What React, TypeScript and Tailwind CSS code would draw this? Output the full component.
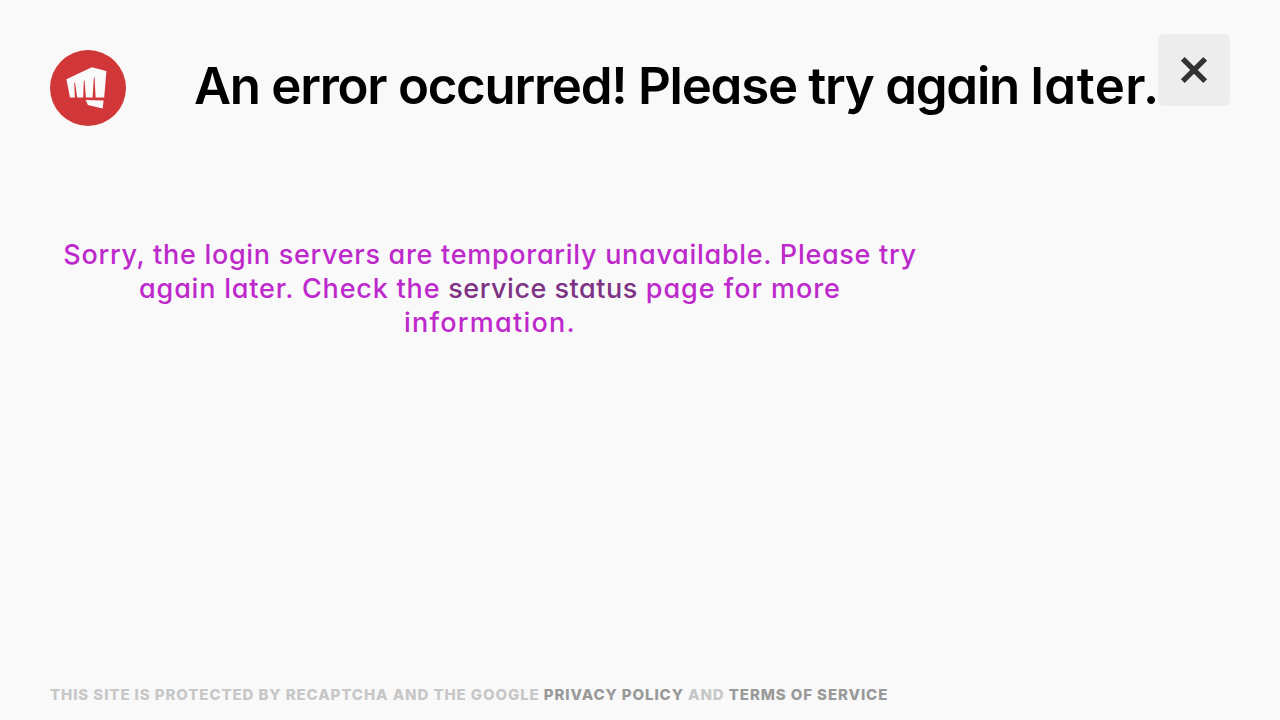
import { FC } from 'react';

const Logo: FC = () => (
  <svg viewBox="0 0 76 76" className="h-[76px] w-[76px] shrink-0" aria-hidden="true">
    <circle cx="38" cy="38" r="38" fill="#d13639" />
    <path
      fill="#f9f9f9"
      d="M16.4 29.3 41.8 17.3 56.4 21 54.2 47.5H45.6L44.6 27.3 43.9 27.5 42.6 47.5H35.9L34.5 30.5 33.8 30.7 33.2 47.5H27.2L25 32.5 24.2 32.7 24.9 47.5H20ZM35.6 50 53.6 50.6 52.7 58.6 37.9 55Z"
    />
  </svg>
);

const CloseButton: FC = () => (
  <button
    aria-label="Close"
    className="-mt-4 flex h-[72px] w-[72px] shrink-0 items-center justify-center rounded-md bg-[#ededed]"
  >
    <svg viewBox="0 0 28 28" className="h-7 w-7" fill="none" stroke="#333" strokeWidth="5.4">
      <path d="M2.8 2.8 25.2 25.2M25.2 2.8 2.8 25.2" />
    </svg>
  </button>
);

const App: FC = () => {
  return (
    <div className="flex h-screen flex-col overflow-hidden bg-[#f9f9f9] px-[50px] font-['Inter',sans-serif] [font-feature-settings:'cv11']">
      <header className="flex items-start pt-[50px]">
        <Logo />
        <h1 className="ml-[68px] w-[964px] shrink-0 whitespace-nowrap text-[51px] leading-[72px] font-semibold tracking-[-1.27px] text-black">
          An error occurred! Please try again <span className="tracking-[0.5px]">later.</span>
        </h1>
        <CloseButton />
      </header>

      <main className="mt-[112px] w-[880px] text-center text-[27px] leading-[34px] font-medium tracking-[0.7px] text-[#be29cc]">
        <p className="whitespace-nowrap">Sorry, the login servers are temporarily unavailable. Please try</p>
        <p className="whitespace-nowrap tracking-[0.8px]">
          again later. Check the{' '}
          <a href="#" className="tracking-[0.5px] text-[#7e3384]">service status</a>
          <span className="tracking-[0.95px]"> page for more</span>
        </p>
        <p className="tracking-[1.25px]">information.</p>
      </main>

      <footer className="mt-auto mb-[15px] whitespace-nowrap text-[15px] leading-5 font-extrabold tracking-[0.9px] text-[#c7c7c7] uppercase">
        This site is protected by reCAPTCHA and the Google{' '}
        <a href="#" className="text-[#999]">Privacy Policy</a> and{' '}
        <a href="#" className="text-[#999]">Terms of Service</a>
      </footer>
    </div>
  );
};

export default App;
